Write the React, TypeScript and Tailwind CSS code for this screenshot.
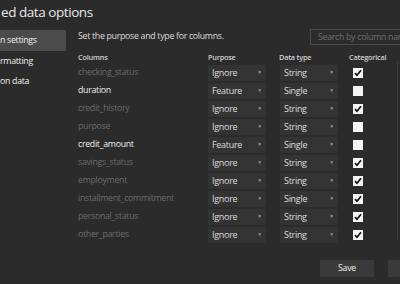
import React from 'react';

type Row = { name: string; purpose: 'Ignore' | 'Feature'; type: 'String' | 'Single'; cat: boolean };

const rows: Row[] = [
  { name: 'checking_status', purpose: 'Ignore', type: 'String', cat: true },
  { name: 'duration', purpose: 'Feature', type: 'Single', cat: false },
  { name: 'credit_history', purpose: 'Ignore', type: 'String', cat: true },
  { name: 'purpose', purpose: 'Ignore', type: 'String', cat: false },
  { name: 'credit_amount', purpose: 'Feature', type: 'Single', cat: false },
  { name: 'savings_status', purpose: 'Ignore', type: 'String', cat: true },
  { name: 'employment', purpose: 'Ignore', type: 'String', cat: true },
  { name: 'installment_commitment', purpose: 'Ignore', type: 'Single', cat: true },
  { name: 'personal_status', purpose: 'Ignore', type: 'String', cat: true },
  { name: 'other_parties', purpose: 'Ignore', type: 'String', cat: true },
];

const Select: React.FC<{ value: string }> = ({ value }) => (
  <div className="flex items-center justify-between w-[58px] h-[16px] bg-[#333333] pl-[4px] pr-[4px] text-[9px] tracking-[-0.3px] text-[#dedede]">
    <span>{value}</span>
    <span className="text-[5px] text-[#9a9a9a]">▼</span>
  </div>
);

const Check: React.FC<{ on: boolean }> = ({ on }) => (
  <div className="w-[10px] h-[10px] bg-[#f4f4f4] flex items-center justify-center">
    {on && (
      <svg width="8" height="8" viewBox="0 0 8 8">
        <path d="M1 4.2 L3 6.3 L7 1.2" fill="none" stroke="#111" strokeWidth="1.7" />
      </svg>
    )}
  </div>
);

export default function App() {
  return (
    <div
      className="w-[400px] h-[284px] overflow-hidden bg-[#2b2b2b] text-[#e6e6e6] relative"
      style={{ fontFamily: '"Open Sans", "Noto Sans", sans-serif' }}
    >
      <div className="h-[28px] pl-[1px] text-[13.5px] tracking-[-0.45px] leading-[24px] text-[#e8e8e8]">ed data options</div>
      <div className="flex">
        <div className="w-[66px] flex flex-col pt-[2px] text-[8.8px] tracking-[-0.3px] text-[#f0f0f0]">
          <div className="h-[21px] bg-[#4b4b4b] flex items-center">n settings</div>
          <div className="h-[21px] flex items-center">rmatting</div>
          <div className="h-[20px] flex items-center">on data</div>
        </div>
        <div className="ml-[12px] flex-1">
          <div className="flex items-center justify-between h-[16px] mt-[1px]">
            <span className="text-[8.8px] tracking-[-0.3px] text-[#dcdcdc]">Set the purpose and type for columns.</span>
            <div className="w-[94px] h-[16px] border border-[#4a4a4a] -mr-[4px] text-[8.8px] tracking-[-0.3px] text-[#6f6f6f] pl-[7px] leading-[14px] whitespace-nowrap overflow-hidden">
              Search by column name
            </div>
          </div>
          <div className="grid grid-cols-[130px_71px_70px_1fr] mt-[6px] h-[12px] items-center text-[7.3px] font-semibold tracking-[-0.2px] text-[#cfcfcf]">
            <span>Columns</span>
            <span>Purpose</span>
            <span>Data type</span>
            <span>Categorical</span>
          </div>
          <div className="flex flex-col mt-[1px]">
            {rows.map((r) => (
              <div key={r.name} className="grid grid-cols-[130px_72px_73px_1fr] h-[18px] items-center">
                <span
                  className={`text-[8.8px] tracking-[-0.3px] ${r.purpose === 'Feature' ? 'text-[#ececec]' : 'text-[#6a6a6a]'}`}
                >
                  {r.name}
                </span>
                <Select value={r.purpose} />
                <Select value={r.type} />
                <Check on={r.cat} />
              </div>
            ))}
          </div>
          <div className="flex justify-end gap-[14px] mt-[16px] -mr-[28px]">
            <div className="w-[54px] h-[17px] bg-[#3a3a3a] text-[8.8px] tracking-[-0.3px] flex items-center justify-center text-[#eeeeee]">
              Save
            </div>
            <div className="w-[40px] h-[17px] bg-[#3a3a3a]" />
          </div>
        </div>
      </div>
      <div className="absolute left-[397px] top-[62px] w-[1px] h-[178px] bg-[#3d3d3d]" />
    </div>
  );
}
